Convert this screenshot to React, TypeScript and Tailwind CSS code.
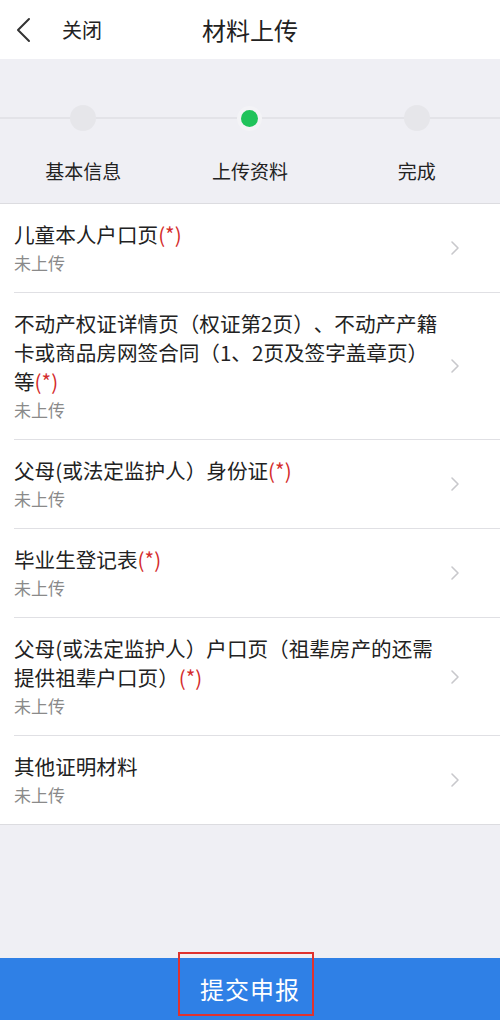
import React from 'react';

interface UploadItem {
  title: string;
  required: boolean;
}

const ITEMS: UploadItem[] = [
  { title: '儿童本人户口页', required: true },
  { title: '不动产权证详情页（权证第2页）、不动产产籍卡或商品房网签合同（1、2页及签字盖章页）等', required: true },
  { title: '父母(或法定监护人）身份证', required: true },
  { title: '毕业生登记表', required: true },
  { title: '父母(或法定监护人）户口页（祖辈房产的还需提供祖辈户口页）', required: true },
  { title: '其他证明材料', required: false },
];

const STEPS = [
  { label: '基本信息', active: false },
  { label: '上传资料', active: true },
  { label: '完成', active: false },
];

const font = { fontFamily: '"Noto Sans CJK SC", "Noto Sans", sans-serif' };

const App: React.FC = () => {
  return (
    <div className="w-[500px] h-[1020px] flex flex-col bg-[#efeff4] [text-spacing-trim:space-all]" style={font}>
      {/* Header */}
      <div className="h-[59px] bg-white flex items-center relative shrink-0">
        <div className="flex items-center pl-[14px]">
          <svg className="w-[18px] h-[26px]" viewBox="0 0 18 26" fill="none">
            <path d="M15 2 L4 13 L15 24" stroke="#333" strokeWidth="2" strokeLinecap="round" strokeLinejoin="round" />
          </svg>
          <span className="ml-[30px] text-[20px] text-[#222]">关闭</span>
        </div>
        <div className="absolute left-0 right-0 text-center text-[24px] text-[#222] pointer-events-none">
          材料上传
        </div>
      </div>

      {/* Steps */}
      <div className="h-[145px] shrink-0 border-b border-[#dcdce0] relative">
        <div className="absolute left-0 right-0 top-[58px] h-[2px] bg-[#e3e3e8]" />
        <div className="grid grid-cols-3 relative pt-[46px]">
          {STEPS.map((s) => (
            <div key={s.label} className="flex flex-col items-center">
              <div className="w-[26px] h-[26px] flex items-center justify-center">
                {s.active ? (
                  <span className="w-[17px] h-[17px] rounded-full bg-[#1fc35a] ring-4 ring-[#f3f3f6]" />
                ) : (
                  <span className="w-[26px] h-[26px] rounded-full bg-[#e6e6ea]" />
                )}
              </div>
              <span className="mt-[26px] text-[19px] leading-[27px] text-[#222]">{s.label}</span>
            </div>
          ))}
        </div>
      </div>

      {/* List */}
      <div className="bg-white border-b border-[#dcdce0] shrink-0">
        {ITEMS.map((item, i) => (
          <div key={i} className="pl-[14px]">
            <div
              className={`flex items-center py-4 pr-[40px] ${
                i < ITEMS.length - 1 ? 'border-b border-[#e0e0e4]' : ''
              }`}
            >
              <div className="flex-1 min-w-0 pr-[8px]">
                <div className="text-[20.6px] leading-[29px] text-[#222]">
                  {item.title}
                  {item.required && <span className="text-[#d42c2c]">(*)</span>}
                </div>
                <div className="text-[17px] leading-[27px] text-[#8a8a8a]">未上传</div>
              </div>
              <svg className="w-[10px] h-[16px] shrink-0" viewBox="0 0 10 16" fill="none">
                <path d="M2 2 L8 8 L2 14" stroke="#c8c8cc" strokeWidth="1.6" strokeLinecap="round" strokeLinejoin="round" />
              </svg>
            </div>
          </div>
        ))}
      </div>

      <div className="flex-1" />

      {/* Submit */}
      <div className="h-[62px] bg-[#2f80e6] flex items-center justify-center shrink-0 relative">
        <div className="absolute left-[178px] top-[-6px] w-[136px] h-[64px] border-2 border-[#e0322e]" />
        <span className="text-[24px] text-white tracking-[1px]">提交申报</span>
      </div>
    </div>
  );
};

export default App;
